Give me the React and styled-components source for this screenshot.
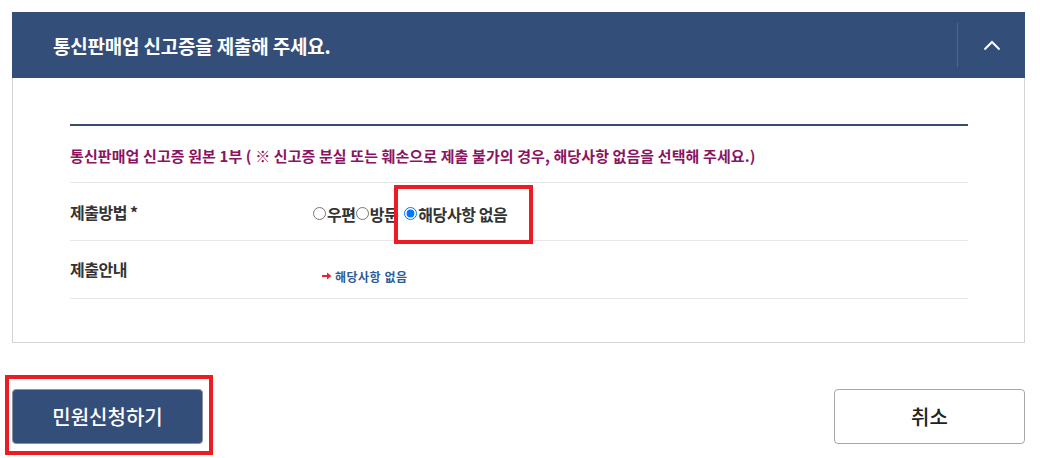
import React from 'react';
import styled, { createGlobalStyle } from 'styled-components';

const GlobalStyle = createGlobalStyle`
  html, body {
    margin: 0;
    padding: 0;
    background: #fff;
  }
  body {
    font-family: "Noto Sans CJK KR", "Noto Sans", sans-serif;
    color: #333;
  }
`;

const Page = styled.div`
  box-sizing: border-box;
  min-height: 100vh;
  padding: 12px 15px 0 12px;
`;

const Panel = styled.section`
  display: flex;
  flex-direction: column;
`;

const PanelHeader = styled.div`
  display: flex;
  align-items: center;
  height: 66px;
  background: #344e7a;
  padding-left: 41px;
`;

const Title = styled.h2`
  flex: 1;
  margin: 0;
  font-size: 19px;
  font-weight: 700;
  letter-spacing: -0.2px;
  color: #fff;
`;

const Toggle = styled.button`
  display: flex;
  align-items: center;
  justify-content: center;
  width: 68px;
  height: 44px;
  padding: 0;
  background: transparent;
  border: 0;
  border-left: 1px solid rgba(255, 255, 255, 0.14);
  cursor: pointer;
`;

const PanelBody = styled.div`
  border: 1px solid #d4d4d4;
  border-top: 0;
  padding: 46px 56px 43px 57px;
`;

const Notice = styled.p`
  margin: 0;
  border-top: 2px solid #344e7a;
  padding: 19px 0 0;
  height: 37px;
  font-size: 15px;
  font-weight: 700;
  letter-spacing: 0.1px;
  color: #8a1461;
  line-height: 22px;
`;

const Row = styled.div`
  display: grid;
  grid-template-columns: 243px 1fr;
  align-items: center;
  height: 57px;
  border-top: 1px solid #e8e8e8;
  &:last-child {
    border-bottom: 1px solid #e8e8e8;
  }
`;

const Label = styled.div`
  font-size: 16px;
  font-weight: 700;
  letter-spacing: -0.5px;
  color: #333;
  margin-top: ${(p) => p.$shift || 0}px;
`;

const RadioGroup = styled.div`
  display: flex;
  align-items: center;
  margin-top: 4px;
`;

const Option = styled.label`
  position: relative;
  display: inline-flex;
  align-items: center;
  font-size: 16px;
  font-weight: 700;
  letter-spacing: -0.4px;
  color: #333;
  margin-left: ${(p) => p.$gap || 0}px;
`;

const Radio = styled.input`
  width: 13px;
  height: 13px;
  margin: 0 1px 0 0;
`;

const Mark = styled.span`
  position: absolute;
  box-sizing: border-box;
  border: 4px solid #ed1c24;
  pointer-events: none;
  top: ${(p) => p.$t}px;
  right: ${(p) => p.$r}px;
  bottom: ${(p) => p.$b}px;
  left: ${(p) => p.$l}px;
`;

const Guide = styled.div`
  display: flex;
  align-items: center;
  gap: 3px;
  margin: 13px 0 0 9px;
  font-size: 12px;
  font-weight: 700;
  letter-spacing: 0.5px;
  color: #2e5c9a;
`;

const Actions = styled.div`
  display: flex;
  justify-content: space-between;
  align-items: flex-start;
  margin-top: 46px;
`;

const ButtonWrap = styled.div`
  position: relative;
  display: flex;
  height: 55px;
`;

const Button = styled.button`
  box-sizing: border-box;
  width: ${(p) => p.$w}px;
  height: 55px;
  border-radius: 4px;
  font-family: "Noto Sans CJK KR", "Noto Sans", sans-serif;
  font-size: 20px;
  font-weight: 500;
  cursor: pointer;
  background: ${(p) => (p.$primary ? '#344e7a' : '#fff')};
  color: ${(p) => (p.$primary ? '#fff' : '#222')};
  border: 1px solid ${(p) => (p.$primary ? '#8a93a3' : '#a8a8a8')};
`;

const ChevronUp = () => (
  <svg width="18" height="11" viewBox="0 0 18 11">
    <polyline points="1.5,9.5 9,2 16.5,9.5" fill="none" stroke="#fff" strokeWidth="2" />
  </svg>
);

const ArrowRight = () => (
  <svg width="10" height="8" viewBox="0 0 10 8">
    <line x1="0" y1="4" x2="6" y2="4" stroke="#e5262d" strokeWidth="2" />
    <polygon points="5,0.5 9.5,4 5,7.5" fill="#e5262d" />
  </svg>
);

export default function App() {
  return (
    <Page>
      <GlobalStyle />
      <Panel>
        <PanelHeader>
          <Title>통신판매업 신고증을 제출해 주세요.</Title>
          <Toggle aria-label="접기">
            <ChevronUp />
          </Toggle>
        </PanelHeader>
        <PanelBody>
          <Notice>
            통신판매업 신고증 원본 1부 ( ※ 신고증 분실 또는 훼손으로 제출 불가의 경우, 해당사항 없음을 선택해 주세요.)
          </Notice>
          <Row>
            <Label>제출방법 *</Label>
            <RadioGroup>
              <Option>
                <Radio type="radio" name="method" />
                우편
              </Option>
              <Option>
                <Radio type="radio" name="method" />
                방문
              </Option>
              <Option $gap={6}>
                <Radio type="radio" name="method" defaultChecked />
                해당사항 없음
                <Mark $t={-17} $r={-26} $b={-18} $l={-10} />
              </Option>
            </RadioGroup>
          </Row>
          <Row>
            <Label $shift={-2}>제출안내</Label>
            <Guide>
              <ArrowRight />
              해당사항 없음
            </Guide>
          </Row>
        </PanelBody>
      </Panel>
      <Actions>
        <ButtonWrap>
          <Button $primary $w={191}>민원신청하기</Button>
          <Mark $t={-14} $r={-10} $b={-11} $l={-7} />
        </ButtonWrap>
        <Button $w={191}>취소</Button>
      </Actions>
    </Page>
  );
}
